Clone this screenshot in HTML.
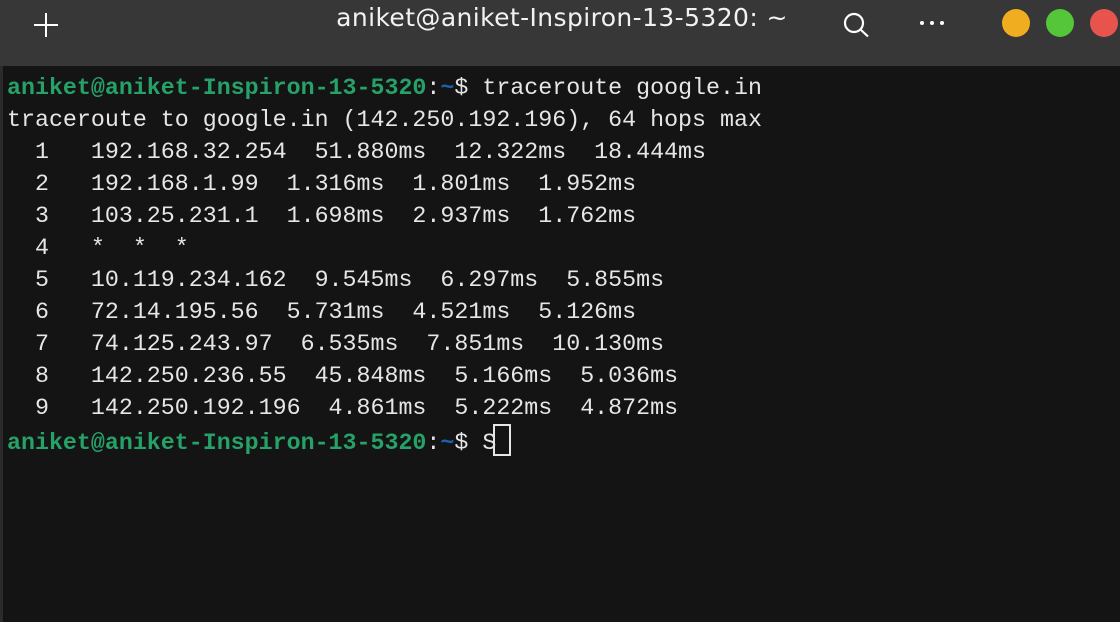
<!DOCTYPE html>
<html><head><meta charset="utf-8"><style>
html,body{margin:0;padding:0;width:1120px;height:622px;overflow:hidden;background:#141414}
.bar{position:absolute;left:0;top:0;width:1120px;height:66px;background:#373737}
.edge{position:absolute;left:0;top:66px;width:3px;height:556px;background:#2b2b2b}
.title{position:absolute;left:0;width:1120px;top:3px;text-align:center;color:#f2f2f2;font:25px "DejaVu Sans","Liberation Sans",sans-serif;letter-spacing:0.4px;padding-left:4px;box-sizing:border-box}
.c{position:absolute;top:9px;width:28px;height:28px;border-radius:50%}
pre{position:absolute;left:7px;top:72px;margin:0;font:23.3px/32px "Liberation Mono",monospace;color:#e6e6e6}
.g{color:#26a269;font-weight:bold}.b{color:#1d5fb0;font-weight:bold}
.cur{display:inline-block;width:14px;height:28px;border:2px solid #e6e6e6;vertical-align:-7px;margin-left:-3px}
</style></head><body>
<div class="bar"></div>
<div class="edge"></div>
<svg style="position:absolute;left:32px;top:11px" width="28" height="28"><path d="M14 2V26M2 14H26" stroke="#fff" stroke-width="2"/></svg>
<div class="title">aniket@aniket-Inspiron-13-5320: ~</div>
<svg style="position:absolute;left:842px;top:10px" width="32" height="30"><circle cx="12" cy="13" r="9" fill="none" stroke="#fff" stroke-width="2.2"/><path d="M18.5 19.5L26 26.5" stroke="#fff" stroke-width="2.2"/></svg>
<svg style="position:absolute;left:918px;top:18px" width="30" height="10"><circle cx="4" cy="5" r="2" fill="#fff"/><circle cx="14" cy="5" r="2" fill="#fff"/><circle cx="24" cy="5" r="2" fill="#fff"/></svg>
<div class="c" style="left:1002px;background:#f0ad1f"></div>
<div class="c" style="left:1046px;background:#55c639"></div>
<div class="c" style="left:1090px;background:#e9534e"></div>
<pre><span class="g">aniket@aniket-Inspiron-13-5320</span>:<span class="b">~</span>$ traceroute google.in
traceroute to google.in (142.250.192.196), 64 hops max
  1   192.168.32.254  51.880ms  12.322ms  18.444ms
  2   192.168.1.99  1.316ms  1.801ms  1.952ms
  3   103.25.231.1  1.698ms  2.937ms  1.762ms
  4   *  *  *
  5   10.119.234.162  9.545ms  6.297ms  5.855ms
  6   72.14.195.56  5.731ms  4.521ms  5.126ms
  7   74.125.243.97  6.535ms  7.851ms  10.130ms
  8   142.250.236.55  45.848ms  5.166ms  5.036ms
  9   142.250.192.196  4.861ms  5.222ms  4.872ms
<span class="g">aniket@aniket-Inspiron-13-5320</span>:<span class="b">~</span>$ S<span class="cur"></span></pre>
</body></html>
